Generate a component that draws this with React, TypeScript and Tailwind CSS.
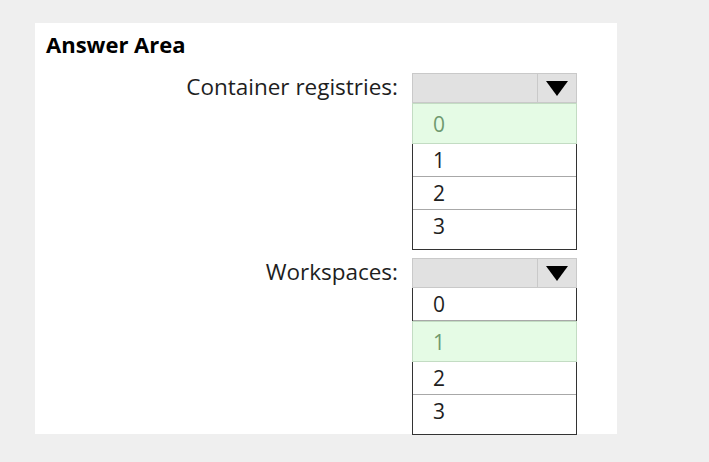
const options = ["0", "1", "2", "3"];

const Dropdown = ({ selected }: { selected: number }) => {
  return (
    <div className="w-[165px]">
      <div className="flex h-[30px] border border-[#c9c9c9] bg-[#e1e1e1]">
        <div className="flex-1" />
        <div className="flex w-[39px] items-center justify-center border-l border-[#c9c9c9]">
          <svg width="22" height="15" viewBox="0 0 22 15">
            <path d="M0 0 L22 0 L11 15 Z" fill="#000" />
          </svg>
        </div>
      </div>
      <div className="border-x border-b border-[#333]">
        {options.map((opt, i) => {
          const isSel = i === selected;
          const isLast = i === options.length - 1;
          return (
            <div
              key={opt}
              className={`flex items-start pl-[20px] ${
                isSel
                  ? "h-[41px] -mx-px border border-[#c3dcc3] bg-[#e5fbe5] pt-[5px] text-[#6f9a6f]"
                  : `${isLast ? "h-[39px]" : "h-[33px] border-b border-[#a8a8a8]"} pt-[1px] text-[#1e1e1e]`
              }`}
            >
              {opt}
            </div>
          );
        })}
      </div>
    </div>
  );
};

const Row = ({ label, selected }: { label: string; selected: number }) => (
  <div className="flex items-start">
    <div className="flex h-[30px] w-[363px] items-center justify-end pb-[3px] text-[22.5px] text-[#1e1e1e]">
      {label}
    </div>
    <div className="ml-[14px]">
      <Dropdown selected={selected} />
    </div>
  </div>
);

export default function App() {
  return (
    <div
      className="h-[462px] w-full bg-[#efefef] pl-[35px] pt-[23px] text-[21px] leading-[30px]"
      style={{ fontFamily: '"Open Sans", "Noto Sans", sans-serif' }}
    >
      <div className="h-[411px] w-[582px] bg-white">
        <div className="pl-[11px] pt-[7px] text-[22px] font-bold leading-[28px] text-black">
          Answer Area
        </div>
        <div className="mt-[15px]">
          <Row label="Container registries:" selected={0} />
        </div>
        <div className="mt-[8px]">
          <Row label="Workspaces:" selected={1} />
        </div>
      </div>
    </div>
  );
}
